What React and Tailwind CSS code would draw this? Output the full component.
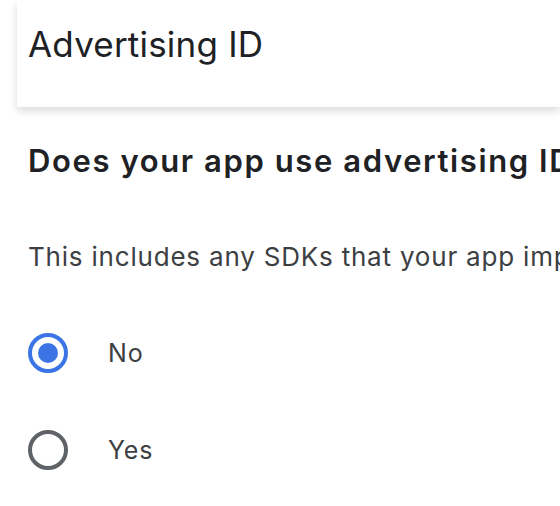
export default function App() {
  const options = [
    { id: "no", label: "No", checked: true },
    { id: "yes", label: "Yes", checked: false },
  ];

  return (
    <div className="w-[560px] h-[506px] overflow-hidden bg-white font-['Inter',sans-serif] whitespace-nowrap">
      {/* page header */}
      <div className="ml-[17px] h-[107px] bg-white shadow-[0_4px_8px_rgba(0,0,0,0.14)] pl-[11px] pt-[24px]">
        <h1 className="text-[35px] leading-[40px] tracking-[0.2px] text-[#202124]">Advertising ID</h1>
      </div>

      <div className="pl-[28px]">
        <h2 className="mt-[34px] text-[31px] leading-[40px] font-semibold tracking-[1.6px] text-[#202124]">
          Does your app use advertising ID?
        </h2>
        <p className="mt-[60px] text-[26px] leading-[32px] tracking-[0.8px] text-[#3c4043]">
          This includes any SDKs that your app imports that use advertising ID
        </p>

        <div className="mt-[60px] flex flex-col gap-[57px]">
          {options.map((o) => (
            <label key={o.id} className="flex items-center h-[40px]">
              <span
                className={
                  o.checked
                    ? "w-[40px] h-[40px] rounded-full border-[4px] border-[#3b74e4] flex items-center justify-center"
                    : "w-[40px] h-[40px] rounded-full border-[4px] border-[#5f6368]"
                }
              >
                {o.checked && <span className="w-[20px] h-[20px] rounded-full bg-[#3b74e4]" />}
              </span>
              <span className="ml-[40px] text-[25px] leading-[32px] tracking-[0.8px] text-[#3c4043]">{o.label}</span>
            </label>
          ))}
        </div>
      </div>
    </div>
  );
}
